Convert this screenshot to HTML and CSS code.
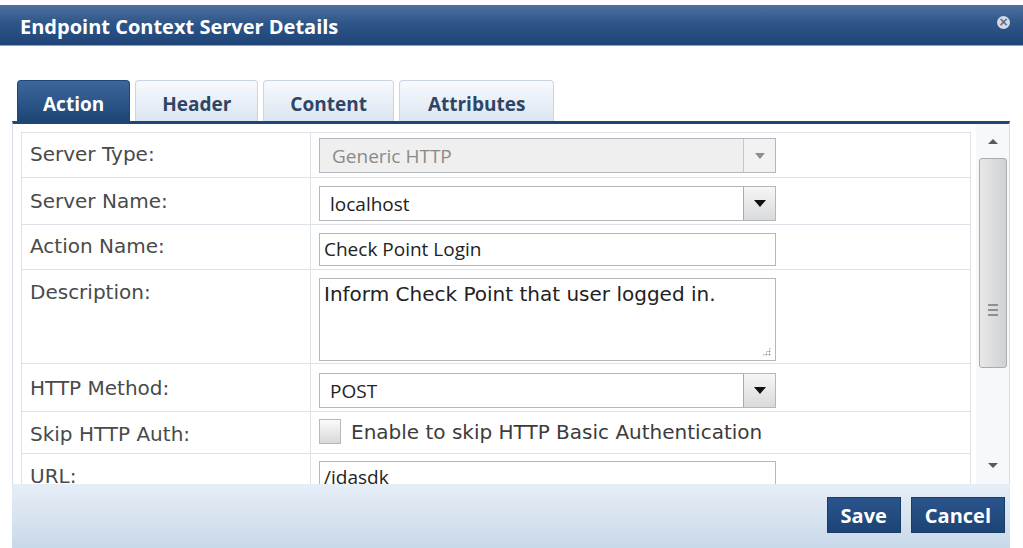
FILE: index.html
```html
<!DOCTYPE html>
<html>
	<head>
		<title>Endpoint Context Server Details</title>
		<meta charset="utf-8" />
		<link rel="stylesheet" href="styles.css">
	</head>
<body>
	<div id="dialog">
		<div id="titlebar">
			<span class="title">Endpoint Context Server Details</span>
			<span class="close">&#215;</span>
		</div>
		<div id="tabs">
			<div class="tab active">Action</div>
			<div class="tab">Header</div>
			<div class="tab">Content</div>
			<div class="tab last">Attributes</div>
		</div>
		<div id="panel">
			<div id="formarea">
				<table id="form">
					<tr class="r1">
						<td class="label">Server Type:</td>
						<td class="field"><div class="select disabled"><span>Generic HTTP</span><span class="arrow"></span></div></td>
					</tr>
					<tr class="r2">
						<td class="label">Server Name:</td>
						<td class="field"><div class="select"><span>localhost</span><span class="arrow"></span></div></td>
					</tr>
					<tr class="r3">
						<td class="label">Action Name:</td>
						<td class="field"><div class="input">Check Point Login</div></td>
					</tr>
					<tr class="r4">
						<td class="label">Description:</td>
						<td class="field"><div class="textarea">Inform Check Point that user logged in.<span class="grip"></span></div></td>
					</tr>
					<tr class="r5">
						<td class="label">HTTP Method:</td>
						<td class="field"><div class="select"><span>POST</span><span class="arrow"></span></div></td>
					</tr>
					<tr class="r6">
						<td class="label">Skip HTTP Auth:</td>
						<td class="field"><div class="check"><span class="box"></span>Enable to skip HTTP Basic Authentication</div></td>
					</tr>
					<tr class="r7">
						<td class="label">URL:</td>
						<td class="field"><div class="input">/idasdk</div></td>
					</tr>
				</table>
			</div>
			<div id="scrollbar">
				<span class="up"></span>
				<div class="thumb"><span class="grip3"></span></div>
				<span class="down"></span>
			</div>
		</div>
		<div id="footer">
			<button class="btn">Save</button>
			<button class="btn">Cancel</button>
		</div>
	</div>
</body>
</html>
```

FILE: styles.css
```css
body {
	margin: 0;
	background-color: #fff;
	font-family: "DejaVu Sans", Verdana, sans-serif;
}
div#dialog {
	width: 1023px;
	height: 548px;
	overflow: hidden;
}
div#titlebar {
	margin-top: 5px;
	height: 40px;
	display: flex;
	align-items: center;
	justify-content: space-between;
	padding: 0 13px 0 20px;
	background: linear-gradient(#4d71a0, #2f5688 45%, #1f4478);
	border-bottom: 1px solid #8aa3c4;
}
div#titlebar .title {
	color: #fff;
	font-family: "Open Sans", sans-serif;
	font-weight: bold;
	font-size: 20px;
	margin-top: 2px;
}
div#titlebar .close {
	width: 13px;
	height: 13px;
	border-radius: 50%;
	background-color: #d3dae3;
	color: #54688a;
	font-size: 12px;
	line-height: 13px;
	text-align: center;
	font-weight: bold;
	margin-top: -5px;
}
div#tabs {
	display: flex;
	gap: 5px;
	margin-top: 33px;
	padding-left: 17px;
	height: 42px;
	align-items: flex-end;
}
.tab {
	height: 41px;
	line-height: 46px;
	box-sizing: border-box;
	padding: 0 26px;
	font-family: "Open Sans", sans-serif;
	font-weight: bold;
	font-size: 19px;
	color: #2e4566;
	background: linear-gradient(#f8fafd, #dbe5f1);
	border: 1px solid #c9d5e3;
	border-bottom: none;
	border-radius: 4px 4px 0 0;
}
.tab.active {
	padding: 0 25px;
	color: #fff;
	background: linear-gradient(#3d669c, #1d4677);
	border-color: #1e4677;
}
.tab.last {
	padding: 0 28px;
}
div#panel {
	margin: 0 13px 0 12px;
	border-top: 3px solid #1e4677;
	border-left: 1px solid #d6dde6;
	border-right: 1px solid #d6dde6;
	height: 363px;
	display: flex;
	box-sizing: border-box;
}
div#formarea {
	flex: 1;
	overflow: hidden;
	padding: 8px 0 0 8px;
}
table#form {
	width: 950px;
	border-collapse: collapse;
}
#form td {
	border: 1px solid #dde2e9;
	vertical-align: top;
}
#form .label {
	width: 289px;
	padding-left: 8px;
	font-size: 20px;
	color: #4a4a4a;
	box-sizing: border-box;
}
#form .field {
	padding-left: 8px;
}
#form .r1 { height: 45px; }
#form .r2 { height: 47px; }
#form .r3 { height: 45px; }
#form .r4 { height: 94px; }
#form .r5 { height: 48px; }
#form .r6 { height: 42px; }
#form .r7 { height: 45px; }
#form .r1 .label { padding-top: 9px; }
#form .r2 .label { padding-top: 11px; }
#form .r3 .label { padding-top: 9px; }
#form .r4 .label { padding-top: 10px; }
#form .r5 .label { padding-top: 12px; }
#form .r6 .label { padding-top: 10px; }
#form .r7 .label { padding-top: 10px; }
#form .r1 .field { padding-top: 5px; }
#form .r2 .field { padding-top: 8px; }
#form .r3 .field { padding-top: 8px; }
#form .r4 .field { padding-top: 8px; }
#form .r5 .field { padding-top: 9px; }
#form .r6 .field { padding-top: 7px; }
#form .r7 .field { padding-top: 7px; }
.select, .input, .textarea {
	width: 457px;
	box-sizing: border-box;
	border: 1px solid #b4b8bd;
	font-family: "Open Sans", sans-serif;
	font-size: 19px;
	color: #222;
	background-color: #fff;
}
.select {
	height: 35px;
	display: flex;
	align-items: center;
	justify-content: space-between;
	padding-left: 10px;
}
.select .arrow {
	width: 32px;
	height: 33px;
	box-sizing: border-box;
	border-left: 1px solid #a8acb2;
	background: linear-gradient(#f6f6f6, #d9dadc);
	position: relative;
}
.select .arrow::after {
	content: "";
	position: absolute;
	left: 10px;
	top: 13px;
	border-left: 6px solid transparent;
	border-right: 6px solid transparent;
	border-top: 7px solid #111;
}
.select.disabled {
	background-color: #efefef;
	color: #8a8a8a;
	padding-left: 12px;
}
.select.disabled .arrow {
	background: #f2f2f2;
	border-left-color: #c8c8c8;
}
.select.disabled .arrow::after {
	border-top-color: #8e8e8e;
	border-left-width: 5px;
	border-right-width: 5px;
	border-top-width: 6px;
	left: 11px;
	top: 14px;
}
.input {
	height: 33px;
	line-height: 31px;
	padding-left: 4px;
}
.textarea {
	height: 83px;
	padding: 3px 4px;
	font-family: "DejaVu Sans", Verdana, sans-serif;
	font-size: 20px;
	position: relative;
}
.textarea .grip {
	position: absolute;
	right: 4px;
	bottom: 4px;
	width: 9px;
	height: 9px;
	background: radial-gradient(circle, #9a9a9a 0.8px, transparent 1.2px) 0 0 / 3px 3px;
	clip-path: polygon(100% 0, 100% 100%, 0 100%);
}
.check {
	display: flex;
	align-items: center;
	gap: 10px;
	font-size: 20px;
	color: #3c3c3c;
}
.check .box {
	width: 22px;
	height: 25px;
	box-sizing: border-box;
	border: 1px solid #b8b8b8;
	background: linear-gradient(#fbfbfb, #d8d8d8);
}
div#scrollbar {
	width: 33px;
	margin-left: 2px;
	background-color: #f7f8f9;
	display: flex;
	flex-direction: column;
	align-items: center;
	padding: 15px 0 0;
	box-sizing: border-box;
}
div#scrollbar .up, div#scrollbar .down {
	width: 0;
	height: 0;
	border-left: 5px solid transparent;
	border-right: 5px solid transparent;
}
div#scrollbar .up {
	border-bottom: 5px solid #5a5a5a;
}
div#scrollbar .down {
	border-top: 5px solid #5a5a5a;
	margin-top: auto;
	margin-bottom: 16px;
}
div#scrollbar .thumb {
	margin-top: 14px;
	width: 28px;
	height: 210px;
	box-sizing: border-box;
	border: 1px solid #a9acb0;
	border-radius: 3px;
	background: linear-gradient(90deg, #e8e8e8, #d0d1d3);
	display: flex;
	align-items: center;
	justify-content: center;
}
.grip3 {
	width: 10px;
	height: 8px;
	border-top: 2px solid #8d8f93;
	border-bottom: 2px solid #8d8f93;
	position: relative;
	margin-top: 94px;
}
.grip3::after {
	content: "";
	position: absolute;
	left: 0;
	right: 0;
	top: 3px;
	border-top: 2px solid #8d8f93;
}
div#footer {
	margin: 0 13px 0 12px;
	height: 64px;
	background: linear-gradient(#e6eef7, #c9d9e9);
	display: flex;
	justify-content: flex-end;
	align-items: flex-start;
	gap: 10px;
	padding: 13px 5px 0 0;
	box-sizing: border-box;
}
.btn {
	height: 36px;
	border: 1px solid #1a3c69;
	background: linear-gradient(#2a558c, #1c4475);
	color: #fff;
	font-family: "Open Sans", sans-serif;
	font-weight: bold;
	font-size: 20px;
	padding: 0 13px;
}
```
